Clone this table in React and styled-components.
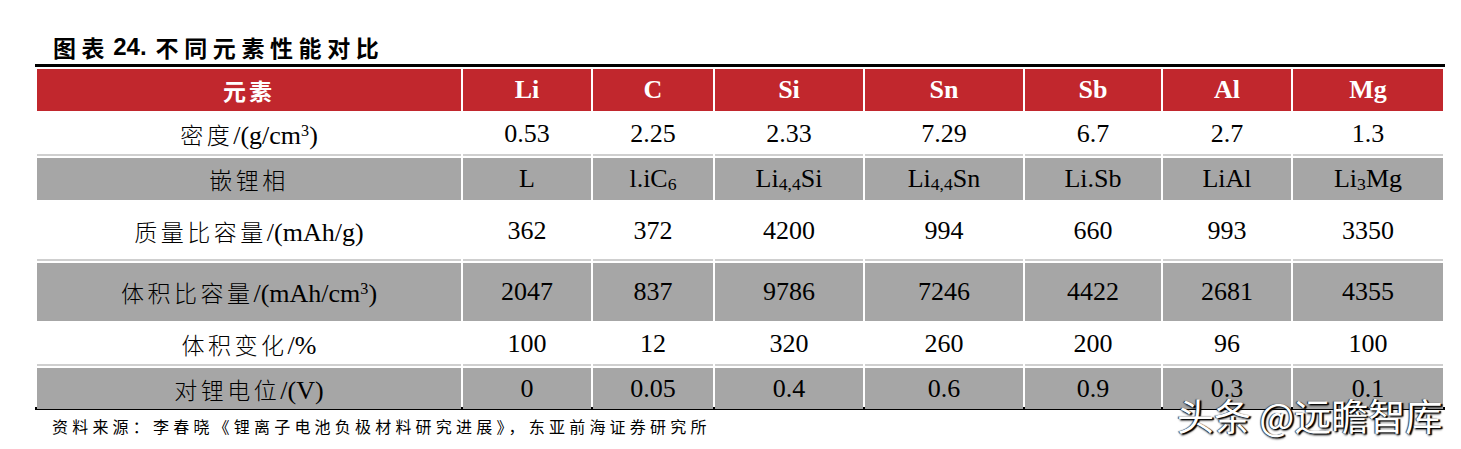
import React from "react";
import styled, { createGlobalStyle } from "styled-components";

const Global = createGlobalStyle`
  html, body { margin: 0; padding: 0; background: #fff; }
  body { font-family: "Liberation Serif", "Noto Sans CJK SC", serif; color: #000; }
`;

const Page = styled.div`
  position: relative;
  width: 1461px;
  height: 449px;
  padding-left: 35px;
  box-sizing: border-box;
`;

const Title = styled.div`
  height: 64px;
  box-sizing: border-box;
  display: flex;
  align-items: flex-end;
  padding: 0 0 3px 18px;
  line-height: 28px;
  font-size: 23px;
  font-weight: 700;
  font-family: "Noto Sans CJK SC", sans-serif;
`;

const TitleCjk = styled.span`
  letter-spacing: 5.6px;
`;

const TitleNum = styled.span`
  font-family: "Liberation Sans", Arial, sans-serif;
  font-size: 24px;
  margin: 0 9px 0 3px;
`;

const Frame = styled.div`
  width: 1410px;
  border-top: 3px solid #000;
  border-bottom: 3px solid #000;
`;

const Table = styled.table`
  width: 1410px;
  table-layout: fixed;
  border-collapse: separate;
  border-spacing: 2px;
  margin: -2px 0;
  position: relative;
  top: 2px;
`;

const Row = styled.tr`
  height: ${(p) => p.$h}px;
`;

const HeadCell = styled.th`
  background: #c1272d;
  color: #fff;
  padding: 0;
  font-size: 26px;
  font-weight: 700;
  text-align: center;
  vertical-align: middle;
`;

const HeadCjk = styled.span`
  font-family: "Noto Sans CJK SC", sans-serif;
  font-size: 23px;
  letter-spacing: 3px;
`;

const Cell = styled.td`
  background: ${(p) => (p.$tone === "gray" ? "#a6a6a6" : "#fff")};
  border-bottom: ${(p) => (p.$tone === "gray" ? "none" : "2px solid #cfcfcf")};
  padding: 0;
  font-size: 26px;
  text-align: center;
  vertical-align: middle;
  white-space: nowrap;
`;

const Cjk = styled.span`
  font-family: "Noto Sans CJK SC", sans-serif;
  font-size: 23px;
  font-weight: 300;
  letter-spacing: 3.5px;
`;

const Sub = styled.sub`
  font-size: 0.68em;
  vertical-align: -0.15em;
  line-height: 0;
`;

const Sup = styled.sup`
  font-size: 0.62em;
  vertical-align: 0.5em;
  line-height: 0;
`;

const Source = styled.div`
  margin-top: 6px;
  padding-left: 17px;
  line-height: 20px;
  font-size: 16px;
  letter-spacing: 4.2px;
  font-family: "Noto Sans CJK SC", sans-serif;
`;

const Watermark = styled.div`
  position: absolute;
  left: 1177px;
  top: 395px;
  font-family: "Noto Sans CJK SC", sans-serif;
  font-size: 37px;
  line-height: 40px;
  color: #fff;
  white-space: nowrap;
  text-shadow: 2px 1px 1px #000, -1px 0 1px rgba(0, 0, 0, 0.8), 1px 2px 2px rgba(0, 0, 0, 0.6);
`;

const cols = [424, 128, 120, 148, 158, 136, 128, 150];
const heads = ["Li", "C", "Si", "Sn", "Sb", "Al", "Mg"];

const rows = [
  {
    tone: "white",
    h: 43,
    label: (
      <>
        <Cjk>密度</Cjk>/(g/cm<Sup>3</Sup>)
      </>
    ),
    values: ["0.53", "2.25", "2.33", "7.29", "6.7", "2.7", "1.3"],
  },
  {
    tone: "gray",
    h: 42,
    label: <Cjk>嵌锂相</Cjk>,
    values: [
      "L",
      <>
        l.iC<Sub>6</Sub>
      </>,
      <>
        Li<Sub>4,4</Sub>Si
      </>,
      <>
        Li<Sub>4,4</Sub>Sn
      </>,
      "Li.Sb",
      "LiAl",
      <>
        Li<Sub>3</Sub>Mg
      </>,
    ],
  },
  {
    tone: "white",
    h: 59,
    label: (
      <>
        <Cjk>质量比容量</Cjk>/(mAh/g)
      </>
    ),
    values: ["362", "372", "4200", "994", "660", "993", "3350"],
  },
  {
    tone: "gray",
    h: 58,
    label: (
      <>
        <Cjk>体积比容量</Cjk>/(mAh/cm<Sup>3</Sup>)
      </>
    ),
    values: ["2047", "837", "9786", "7246", "4422", "2681", "4355"],
  },
  {
    tone: "white",
    h: 43,
    label: (
      <>
        <Cjk>体积变化</Cjk>/%
      </>
    ),
    values: ["100", "12", "320", "260", "200", "96", "100"],
  },
  {
    tone: "gray",
    h: 41,
    label: (
      <>
        <Cjk>对锂电位</Cjk>/(V)
      </>
    ),
    values: ["0", "0.05", "0.4", "0.6", "0.9", "0.3", "0.1"],
  },
];

export default function App() {
  return (
    <>
      <Global />
      <Page>
        <Title>
          <TitleCjk>图表</TitleCjk>
          <TitleNum>24.</TitleNum>
          <TitleCjk>不同元素性能对比</TitleCjk>
        </Title>
        <Frame>
          <Table>
            <colgroup>
              {cols.map((w, i) => (
                <col key={i} style={{ width: w }} />
              ))}
            </colgroup>
            <thead>
              <Row $h={42}>
                <HeadCell>
                  <HeadCjk>元素</HeadCjk>
                </HeadCell>
                {heads.map((h) => (
                  <HeadCell key={h}>{h}</HeadCell>
                ))}
              </Row>
            </thead>
            <tbody>
              {rows.map((r, i) => (
                <Row key={i} $h={r.h}>
                  <Cell $tone={r.tone}>{r.label}</Cell>
                  {r.values.map((v, j) => (
                    <Cell key={j} $tone={r.tone}>
                      {v}
                    </Cell>
                  ))}
                </Row>
              ))}
            </tbody>
          </Table>
        </Frame>
        <Source>
          资料来源：李春晓《锂离子电池负极材料研究进展》，东亚前海证券研究所
        </Source>
        <Watermark>头条 @远瞻智库</Watermark>
      </Page>
    </>
  );
}
